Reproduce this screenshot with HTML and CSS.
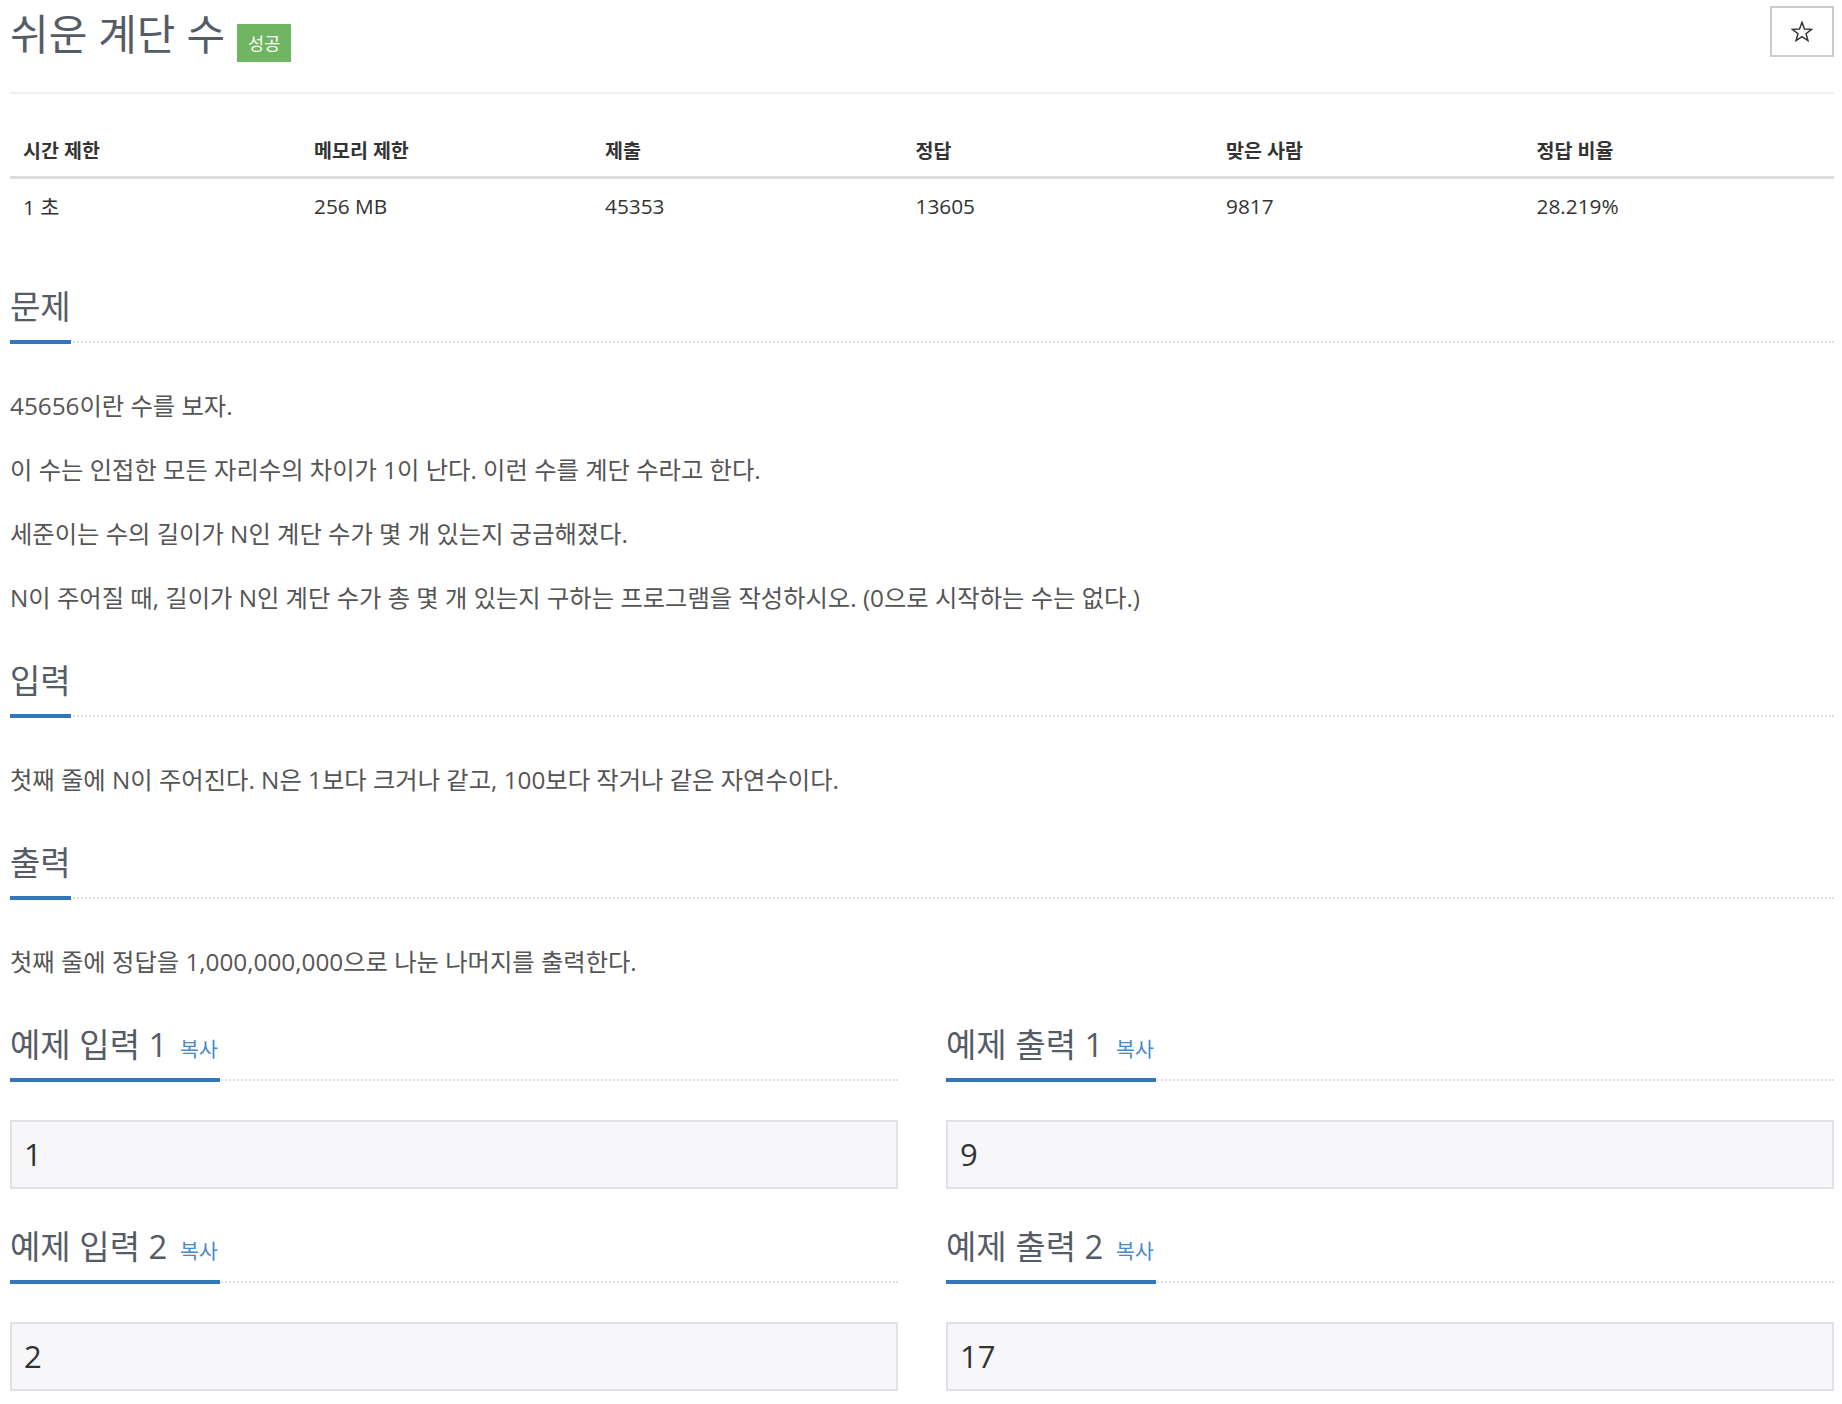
FILE: index.html
```html
<!DOCTYPE html>
<html lang="ko">
<head>
    <meta charset="UTF-8">
    <meta name="viewport" content="width=device-width, initial-scale=1.0">
    <title>쉬운 계단 수</title>
    <link rel="stylesheet" href="styles.css">
</head>
<body>
    <div class="container">
        <div class="page-header">
            <h1>
                <span class="problem-title">쉬운 계단 수</span>
                <span class="label-ac">성공</span>
            </h1>
            <button type="button" class="btn-star" title="즐겨찾기">
                <svg width="22" height="22" viewBox="0 0 24 24">
                    <polygon points="12,1.5 14.7,8.78 22.46,9.1 16.37,13.92 18.47,21.4 12,17.1 5.53,21.4 7.63,13.92 1.54,9.1 9.3,8.78" fill="none" stroke="#333" stroke-width="1.6" stroke-linejoin="miter"/>
                </svg>
            </button>
        </div>

        <table class="problem-info">
            <colgroup>
                <col class="col-a">
                <col class="col-a">
                <col class="col-b">
                <col class="col-b">
                <col class="col-b">
                <col class="col-b">
            </colgroup>
            <thead>
                <tr>
                    <th>시간 제한</th>
                    <th>메모리 제한</th>
                    <th>제출</th>
                    <th>정답</th>
                    <th>맞은 사람</th>
                    <th>정답 비율</th>
                </tr>
            </thead>
            <tbody>
                <tr>
                    <td>1 초</td>
                    <td>256 MB</td>
                    <td>45353</td>
                    <td>13605</td>
                    <td>9817</td>
                    <td>28.219%</td>
                </tr>
            </tbody>
        </table>

        <section class="section first">
            <div class="headline"><h2>문제</h2></div>
            <div class="problem-text">
                <p>45656이란 수를 보자.</p>
                <p>이 수는 인접한 모든 자리수의 차이가 1이 난다. 이런 수를 계단 수라고 한다.</p>
                <p>세준이는 수의 길이가 N인 계단 수가 몇 개 있는지 궁금해졌다.</p>
                <p>N이 주어질 때, 길이가 N인 계단 수가 총 몇 개 있는지 구하는 프로그램을 작성하시오. (0으로 시작하는 수는 없다.)</p>
            </div>
        </section>

        <section class="section">
            <div class="headline"><h2>입력</h2></div>
            <div class="problem-text">
                <p>첫째 줄에 N이 주어진다. N은 1보다 크거나 같고, 100보다 작거나 같은 자연수이다.</p>
            </div>
        </section>

        <section class="section">
            <div class="headline"><h2>출력</h2></div>
            <div class="problem-text">
                <p>첫째 줄에 정답을 1,000,000,000으로 나눈 나머지를 출력한다.</p>
            </div>
        </section>

        <div class="sample-row">
            <section class="section">
                <div class="headline"><h2>예제 입력 1 <a class="copy-button">복사</a></h2></div>
                <pre class="sampledata">1</pre>
            </section>
            <section class="section">
                <div class="headline"><h2>예제 출력 1 <a class="copy-button">복사</a></h2></div>
                <pre class="sampledata">9</pre>
            </section>
        </div>

        <div class="sample-row">
            <section class="section">
                <div class="headline"><h2>예제 입력 2 <a class="copy-button">복사</a></h2></div>
                <pre class="sampledata">2</pre>
            </section>
            <section class="section">
                <div class="headline"><h2>예제 출력 2 <a class="copy-button">복사</a></h2></div>
                <pre class="sampledata">17</pre>
            </section>
        </div>
    </div>
</body>
</html>
```

FILE: styles.css
```css
body {
    font-family: "Open Sans", "Noto Sans CJK KR", sans-serif;
    background-color: #fff;
    color: #333;
    margin: 0;
}
.container {
    padding: 0 8px 0 10px;
}
.page-header {
    display: flex;
    justify-content: space-between;
    align-items: flex-start;
    height: 92px;
    border-bottom: 2px solid #eee;
}
.page-header h1 {
    display: flex;
    align-items: flex-start;
    margin: 0;
    font-weight: 400;
}
.problem-title {
    font-size: 42px;
    line-height: 68px;
    color: #555c66;
}
.label-ac {
    margin-top: 24px;
    margin-left: 12px;
    height: 38px;
    line-height: 38px;
    padding: 0 11px;
    font-size: 17.5px;
    color: #fff;
    background-color: #6fb562;
}
.btn-star {
    margin-top: 6px;
    width: 64px;
    height: 51px;
    padding: 0;
    background-color: #fff;
    border: 2px solid #ccc;
    display: flex;
    align-items: center;
    justify-content: center;
    cursor: pointer;
}
.problem-info {
    width: 100%;
    margin-top: 28px;
    border-collapse: collapse;
    table-layout: fixed;
}
.col-a {
    width: 291px;
}
.problem-info th {
    height: 54px;
    padding: 0 13px;
    text-align: left;
    font-size: 19.5px;
    font-weight: 700;
    border-bottom: 3px solid #ddd;
}
.problem-info td {
    height: 54px;
    padding: 0 13px;
    font-size: 20.8px;
}
.section.first {
    margin-top: 52px;
}
.section + .section,
.sample-row {
    margin-top: 37px;
}
.sample-row + .sample-row {
    margin-top: 36px;
}
.headline {
    display: flex;
    border-bottom: 2px dotted #dcdde5;
}
.headline h2 {
    margin: 0 0 -3px;
    padding-bottom: 11px;
    font-size: 33px;
    font-weight: 400;
    line-height: 44px;
    color: #555c66;
    border-bottom: 4px solid #3175ba;
}
.copy-button {
    margin-left: 4px;
    margin-right: 2px;
    font-size: 20.5px;
    line-height: 1;
    color: #4a89c8;
    cursor: pointer;
}
.problem-text {
    margin-top: 39px;
}
.problem-text p {
    margin: 0 0 16px;
    font-size: 24.3px;
    line-height: 48px;
    color: #555;
}
.problem-text p:last-child {
    margin-bottom: 0;
}
.sample-row {
    display: grid;
    grid-template-columns: 1fr 1fr;
    gap: 48px;
}
.sample-row .section + .section {
    margin-top: 0;
}
.sampledata {
    margin: 39px 0 0;
    height: 69px;
    box-sizing: border-box;
    padding: 0 12px;
    font-family: "Open Sans", sans-serif;
    font-size: 31px;
    line-height: 65px;
    color: #333;
    background-color: #f7f7f9;
    border: 2px solid #e1e1e8;
}
```
